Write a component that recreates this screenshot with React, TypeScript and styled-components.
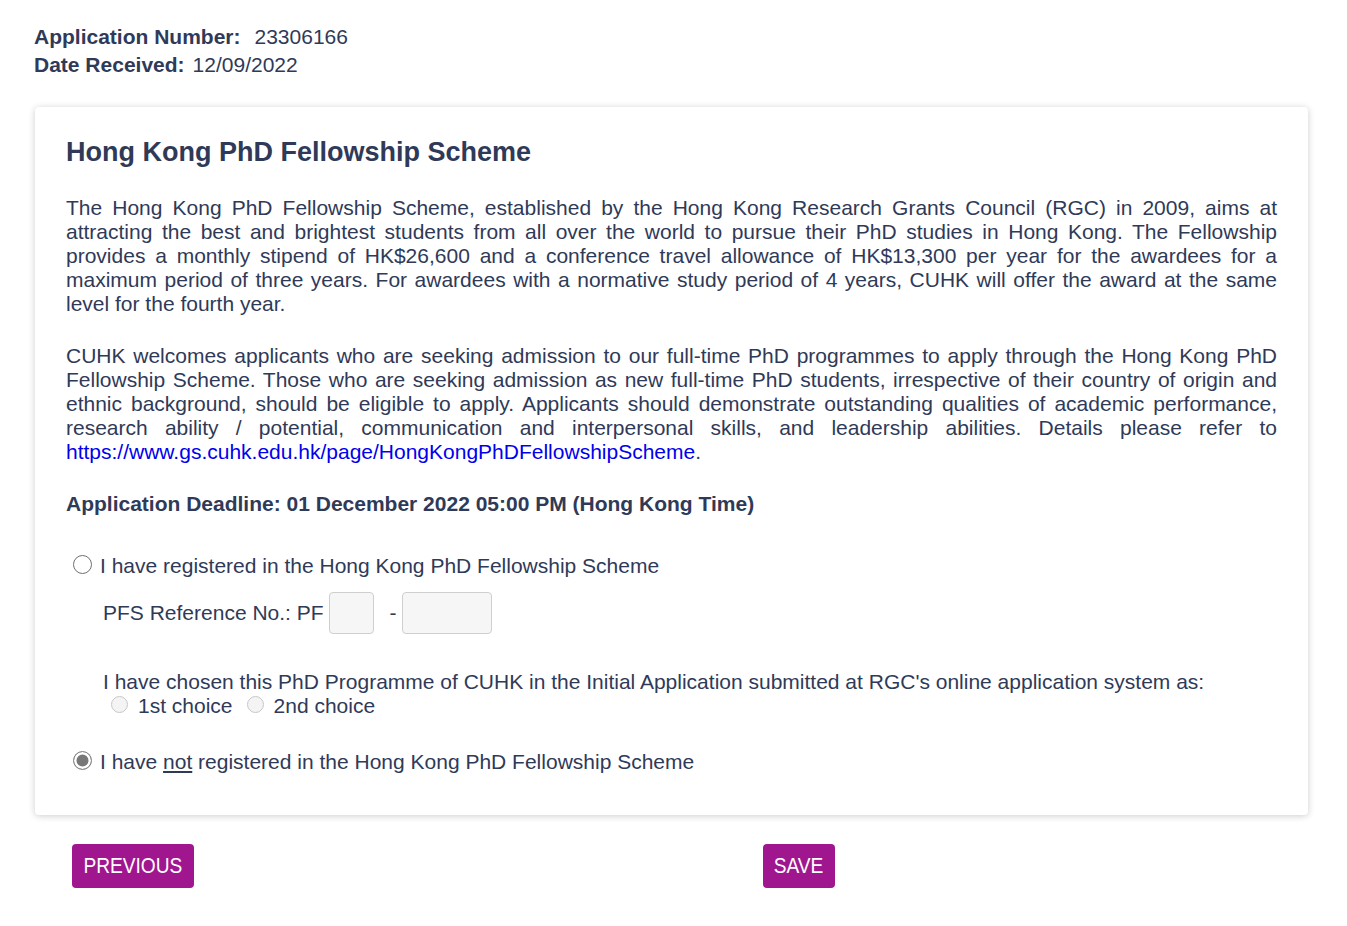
import React from "react";
import styled, { createGlobalStyle } from "styled-components";

const Global = createGlobalStyle`
  html, body { margin: 0; padding: 0; background: #fff; }
  body { font-family: "Liberation Sans", Arial, sans-serif; color: #2f3a58; }
`;

const Page = styled.div`
  padding: 23px 39px 40px 34px;
`;

const Meta = styled.div`
  font-size: 21px;
  line-height: 28px;
  margin-bottom: 28px;
`;

const MetaLabel = styled.b<{ $gap?: number }>`
  font-weight: 700;
  margin-right: ${(p) => p.$gap ?? 5}px;
`;

const Card = styled.section`
  margin-left: 1px;
  background: #fff;
  border-radius: 4px;
  box-shadow: 0 1px 7px rgba(0, 0, 0, 0.2);
  padding: 27px 31px 41px 31px;
`;

const Title = styled.h2`
  margin: 0 0 26px 0;
  font-size: 27px;
  line-height: 36px;
  font-weight: 700;
`;

const Para = styled.p`
  margin: 0 0 28px 0;
  font-size: 21px;
  line-height: 24px;
  text-align: justify;
`;

const Link = styled.a`
  color: #0000ee;
  text-decoration: none;
`;

const Deadline = styled.p`
  margin: 0 0 38px 0;
  font-size: 21px;
  line-height: 24px;
  font-weight: 700;
`;

const OptionRow = styled.label`
  display: flex;
  align-items: center;
  gap: 8px;
  font-size: 21px;
  line-height: 24px;
  padding-left: 7px;
`;

const Radio = styled.span<{ $checked?: boolean }>`
  box-sizing: border-box;
  width: 19px;
  height: 19px;
  border-radius: 50%;
  border: 1.5px solid ${(p) => (p.$checked ? "#8a8a8a" : "#6f6f6f")};
  background: ${(p) => (p.$checked ? "#777" : "#fff")};
  box-shadow: ${(p) => (p.$checked ? "inset 0 0 0 2.5px #fff" : "none")};
  margin-top: -4px;
  flex: none;
`;

const SmallRadio = styled.span`
  box-sizing: border-box;
  width: 17px;
  height: 17px;
  border-radius: 50%;
  border: 1px solid #c8c8c8;
  background: #f4f4f4;
  flex: none;
  margin-top: -4px;
`;

const Nested = styled.div`
  padding-left: 37px;
  font-size: 21px;
  line-height: 24px;
`;

const RefRow = styled.div`
  display: flex;
  align-items: center;
  margin-top: 14px;
  margin-bottom: 36px;
`;

const Box = styled.span<{ $w: number }>`
  display: inline-block;
  box-sizing: border-box;
  width: ${(p) => p.$w}px;
  height: 42px;
  border: 1px solid #cfcfcf;
  border-radius: 4px;
  background: #f6f6f6;
`;

const Dash = styled.span`
  margin: 0 6px 0 15px;
`;

const ChoiceRow = styled.div`
  display: flex;
  align-items: center;
  gap: 6px;
  padding-left: 8px;
  margin-bottom: 32px;
`;

const ChoiceItem = styled.span`
  display: inline-flex;
  align-items: center;
  gap: 10px;
  margin-right: 8px;
`;

const Buttons = styled.div`
  display: grid;
  grid-template-columns: 691px auto;
  padding-left: 38px;
  margin-top: 29px;
  align-items: start;
`;

const Button = styled.button<{ $w: number }>`
  justify-self: start;
  display: flex;
  align-items: center;
  justify-content: center;
  width: ${(p) => p.$w}px;
  height: 44px;
  padding: 0;
  border: none;
  border-radius: 4px;
  background: #a0168f;
  color: #fff;
  font-family: "Liberation Sans", Arial, sans-serif;
  font-size: 22px;
  cursor: pointer;
`;

const ButtonText = styled.span`
  display: inline-block;
  transform: scaleX(0.87);
  white-space: nowrap;
`;

export default function App() {
  return (
    <>
      <Global />
      <Page>
        <Meta>
          <div>
            <MetaLabel $gap={14}>Application Number:</MetaLabel>23306166
          </div>
          <div>
            <MetaLabel $gap={8}>Date Received:</MetaLabel>12/09/2022
          </div>
        </Meta>
        <Card>
          <Title>Hong Kong PhD Fellowship Scheme</Title>
          <Para>
            The Hong Kong PhD Fellowship Scheme, established by the Hong Kong Research Grants
            Council (RGC) in 2009, aims at attracting the best and brightest students from all
            over the world to pursue their PhD studies in Hong Kong. The Fellowship provides a
            monthly stipend of HK$26,600 and a conference travel allowance of HK$13,300 per year
            for the awardees for a maximum period of three years. For awardees with a normative
            study period of 4 years, CUHK will offer the award at the same level for the fourth
            year.
          </Para>
          <Para>
            CUHK welcomes applicants who are seeking admission to our full-time PhD programmes to
            apply through the Hong Kong PhD Fellowship Scheme. Those who are seeking admission as
            new full-time PhD students, irrespective of their country of origin and ethnic
            background, should be eligible to apply. Applicants should demonstrate outstanding
            qualities of academic performance, research ability / potential, communication and
            interpersonal skills, and leadership abilities. Details please refer to{" "}
            <Link href="#">https://www.gs.cuhk.edu.hk/page/HongKongPhDFellowshipScheme</Link>.
          </Para>
          <Deadline>Application Deadline: 01 December 2022 05:00 PM (Hong Kong Time)</Deadline>
          <OptionRow>
            <Radio />
            I have registered in the Hong Kong PhD Fellowship Scheme
          </OptionRow>
          <Nested>
            <RefRow>
              PFS Reference No.: PF&nbsp;
              <Box $w={45} />
              <Dash>-</Dash>
              <Box $w={90} />
            </RefRow>
            <div>
              I have chosen this PhD Programme of CUHK in the Initial Application submitted at
              RGC's online application system as:
            </div>
            <ChoiceRow>
              <ChoiceItem>
                <SmallRadio />
                1st choice
              </ChoiceItem>
              <ChoiceItem>
                <SmallRadio />
                2nd choice
              </ChoiceItem>
            </ChoiceRow>
          </Nested>
          <OptionRow>
            <Radio $checked />
            <span>
              I have <u>not</u> registered in the Hong Kong PhD Fellowship Scheme
            </span>
          </OptionRow>
        </Card>
        <Buttons>
          <Button $w={122}>
            <ButtonText>PREVIOUS</ButtonText>
          </Button>
          <Button $w={72}>
            <ButtonText>SAVE</ButtonText>
          </Button>
        </Buttons>
      </Page>
    </>
  );
}
